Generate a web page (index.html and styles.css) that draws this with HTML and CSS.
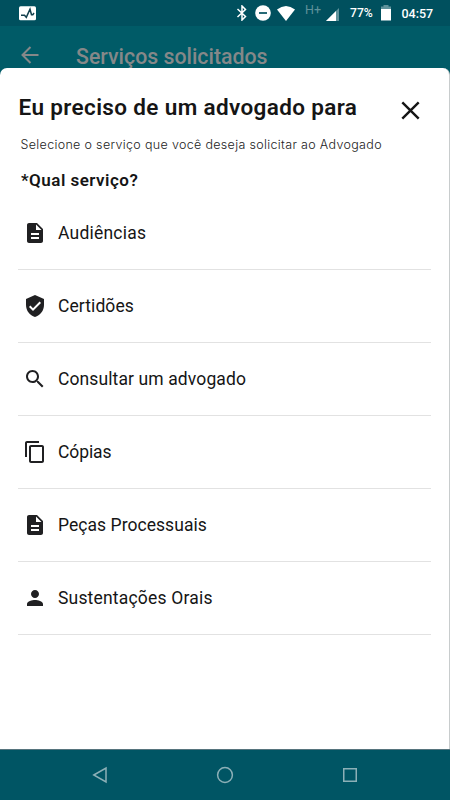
FILE: index.html
```html
<!DOCTYPE html>
<html lang="pt-BR">
<head>
<meta charset="utf-8">
<title>Serviços solicitados</title>
<link rel="stylesheet" href="styles.css">
</head>
<body>
<div class="screen">
  <header class="status">
    <svg class="app-icon" width="17" height="15" viewBox="0 0 17 15"><rect y="0.3" width="17" height="14" rx="1.6" fill="#fff"/><path d="M2 9.300h3.500L7.300 11.300L11 3.200l1.500 5.500h1.300l1.200-1.700" fill="none" stroke="#123f4c" stroke-width="1.500"/></svg>
    <svg class="bluetooth" width="12" height="16" viewBox="0 0 12 16"><path d="M1.500 4l8 7.500L6 15V1l3.500 3.500L1.500 12" fill="none" stroke="#fff" stroke-width="1.500"/></svg>
    <svg class="dnd" width="16" height="16" viewBox="0 0 16 16"><circle cx="8" cy="8" r="7.800" fill="#fff"/><path d="M4 8h8" stroke="#00505e" stroke-width="1.700"/></svg>
    <svg class="wifi" width="18" height="15" viewBox="0 0 18 15"><path d="M0 3.500Q9-3.500 18 3.500L9 15z" fill="#fff"/></svg>
    <span class="network">H+</span>
    <svg class="signal" width="13" height="13" viewBox="0 0 13 13"><path d="M0 13L13 0v13z" fill="#5f929b"/><path d="M0 13L10 3V13z" fill="#fff"/></svg>
    <span class="percent">77%</span>
    <svg class="battery" width="10" height="16" viewBox="0 0 10 16"><path d="M2.500 0h5v1.500H10V5H0V1.500h2.500z" fill="#5f929b"/><path d="M0 4h10v11.500H0z" fill="#fff"/></svg>
    <span class="clock">04:57</span>
  </header>
  <div class="appbar">
    <svg width="18" height="18" viewBox="0 0 18 18"><path d="M17.500 9H2M9.500 1L1.500 9l8 8" fill="none" stroke="#858889" stroke-width="2"/></svg>
    <span class="appbar-title">Serviços solicitados</span>
  </div>
  <main class="sheet">
    <div class="heading">
      <h1>Eu preciso de um advogado para</h1>
      <svg class="close" width="19" height="19" viewBox="0 0 19 19"><path d="M1.300 1.300l16.400 16.400M17.700 1.300L1.300 17.700" stroke="#151515" stroke-width="2.400"/></svg>
    </div>
    <p class="subtitle">Selecione o serviço que você deseja solicitar ao Advogado</p>
    <h2>*Qual serviço?</h2>
    <ul>
      <li><svg class="icon" viewBox="0 0 24 24"><path d="M14 2H6c-1.100 0-2 .9-2 2v16c0 1.100.9 2 2 2h12c1.100 0 2-.9 2-2V8l-6-6zm2 16H8v-2h8v2zm0-4H8v-2h8v2zm-3-5V3.500L18.500 9H13z"/></svg><span class="audiencias">Audiências</span></li>
      <li><svg class="icon" viewBox="0 0 24 24"><path d="M12 1L3 5v6c0 5.550 3.840 10.740 9 12 5.160-1.260 9-6.450 9-12V5l-9-4zm-2 16l-4-4 1.410-1.410L10 14.170l6.590-6.590L18 9l-8 8z"/></svg><span class="certidoes">Certidões</span></li>
      <li><svg class="icon" viewBox="0 0 24 24"><path d="M15.500 14h-.79l-.28-.27C15.410 12.590 16 11.110 16 9.500 16 5.910 13.090 3 9.500 3S3 5.910 3 9.500 5.910 16 9.500 16c1.610 0 3.090-.59 4.230-1.570l.27.28v.79l5 4.990L20.490 19l-4.990-5zm-6 0C7.010 14 5 11.990 5 9.500S7.010 5 9.500 5 14 7.010 14 9.500 11.990 14 9.500 14z"/></svg><span class="consultar">Consultar um advogado</span></li>
      <li><svg class="icon" viewBox="0 0 24 24"><path d="M16 1H4c-1.100 0-2 .9-2 2v14h2V3h12V1zm3 4H8c-1.100 0-2 .9-2 2v14c0 1.100.9 2 2 2h11c1.100 0 2-.9 2-2V7c0-1.100-.9-2-2-2zm0 16H8V7h11v14z"/></svg><span class="copias">Cópias</span></li>
      <li><svg class="icon" viewBox="0 0 24 24"><path d="M14 2H6c-1.100 0-2 .9-2 2v16c0 1.100.9 2 2 2h12c1.100 0 2-.9 2-2V8l-6-6zm2 16H8v-2h8v2zm0-4H8v-2h8v2zm-3-5V3.500L18.500 9H13z"/></svg><span class="pecas">Peças Processuais</span></li>
      <li><svg class="icon" viewBox="0 0 24 24"><path d="M12 12c2.210 0 4-1.790 4-4s-1.790-4-4-4-4 1.790-4 4 1.790 4 4 4zm0 2c-2.670 0-8 1.340-8 4v2h16v-2c0-2.660-5.330-4-8-4z"/></svg><span class="orais">Sustentações Orais</span></li>
    </ul>
  </main>
  <nav class="navbar">
    <svg width="16" height="18" viewBox="0 0 16 18"><path d="M1.800 9L14 2v14z" fill="none" stroke="#8cb0b7" stroke-width="1.500"/></svg>
    <svg width="18" height="18" viewBox="0 0 18 18"><circle cx="9" cy="9" r="7.400" fill="none" stroke="#8cb0b7" stroke-width="1.500"/></svg>
    <svg width="16" height="18" viewBox="0 0 16 18"><path d="M1.750 2.750h12.500v12.500H1.750z" fill="none" stroke="#8cb0b7" stroke-width="1.500"/></svg>
  </nav>
</div>
</body>
</html>
```
FILE: styles.css
```css
* { box-sizing: border-box; margin: 0; padding: 0; }
body { width: 450px; height: 800px; overflow: hidden; font-family: Roboto, sans-serif; color: #151515; }
svg { display: block; flex: none; }
.screen { display: flex; flex-direction: column; height: 800px; background: #005b67; }
.status { height: 26px; flex: none; background: #00505e; display: flex; align-items: center; padding-left: 19px; color: #fff; font-size: 12.5px; font-weight: 500; white-space: nowrap; }
.bluetooth { margin-left: 200px; }
.dnd { margin-left: 7px; }
.wifi { margin-left: 6px; }
.network { width: 17px; margin: -7px 0 0 10px; color: #5f929b; font-size: 12.5px; font-weight: 400; }
.signal { margin: 2px 0 0 4px; }
.percent { width: 24px; margin-left: 11px; font-size: 12.2px; }
.battery { margin-left: 7px; }
.clock { margin-left: 10.5px; }
.appbar { height: 42px; flex: none; display: flex; padding: 20px 0 0 21px; }
.appbar-title { margin: -3px 0 0 37px; color: #858889; font-size: 21.3px; font-weight: 500; line-height: 28px; height: 24px; white-space: nowrap; }
.sheet { height: 681px; flex: none; background: #fff; border-radius: 7px 7px 0 0; border-right: 1px solid #c8cccd; padding: 24px 18px 0; }
.heading { height: 38px; display: flex; justify-content: space-between; }
h1 { margin-left: .6px; font-size: 22.5px; font-weight: 600; line-height: 31px; white-space: nowrap; letter-spacing: .36px; }
.close { margin: 9px 11px 0 0; }
.subtitle { margin-left: 2.5px; font-family: Inter, sans-serif; font-size: 12.5px; font-weight: 300; line-height: 29px; height: 28px; letter-spacing: .33px; color: #222; white-space: nowrap; }
h2 { margin: 8px 0 0 3px; font-size: 17px; font-weight: 600; line-height: 28px; letter-spacing: .48px; }
ul { list-style: none; margin-top: 3px; }
li { height: 73px; display: flex; align-items: center; gap: 10.8px; border-bottom: 1px solid #e2e2e2; padding-left: 5.2px; font-size: 17.5px; line-height: 22px; white-space: nowrap; }
.audiencias { letter-spacing: .22px; }
.certidoes { letter-spacing: .08px; }
.consultar { letter-spacing: .11px; }
.copias { letter-spacing: -.1px; }
.pecas { letter-spacing: .05px; }
.orais { letter-spacing: .19px; }
.icon { width: 24px; height: 24px; fill: #202022; }
.navbar { height: 51px; flex: none; display: flex; align-items: center; justify-content: space-between; padding: 0 92px; background: #005564; border-top: 1px solid #56747d; }
```
